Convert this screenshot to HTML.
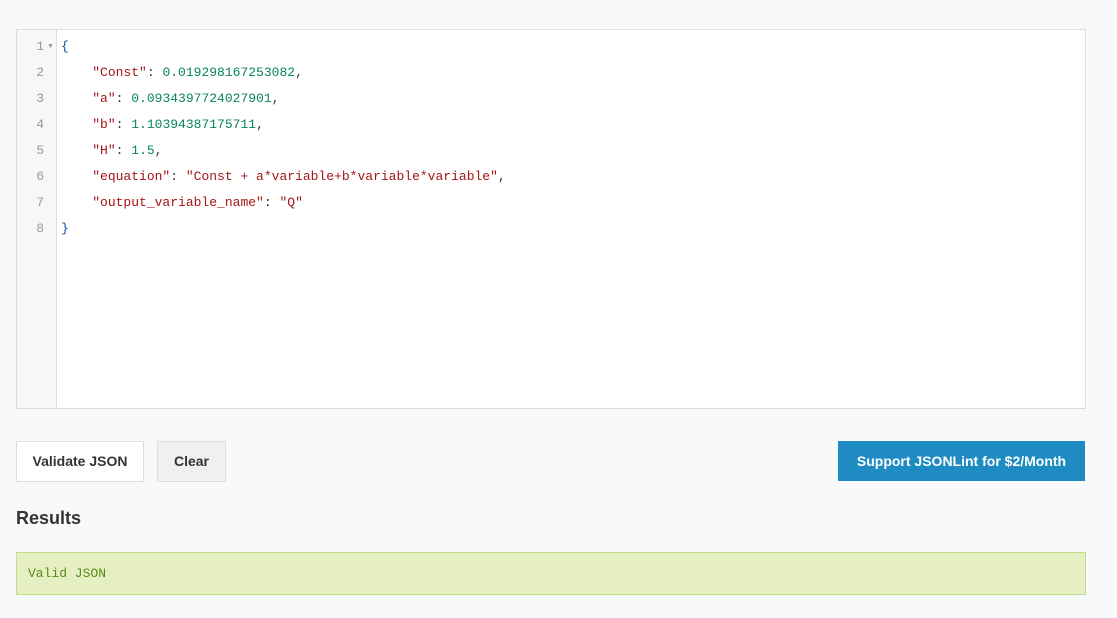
<!DOCTYPE html>
<html><head><style>
body{margin:0;background:#f8f9fb;width:1117px;height:618px;overflow:hidden;font-family:"Liberation Sans",sans-serif;}
.ed{position:absolute;left:16px;top:29px;width:1068px;height:378px;border:1px solid #ddd;background:#fff;}
.gut{position:absolute;left:0;top:0;width:39px;height:100%;background:#f7f7f7;border-right:1px solid #ddd;}
.ln{position:absolute;left:0;width:27px;text-align:right;color:#999;font:13px "Liberation Mono",monospace;line-height:26px;}
.code{position:absolute;left:44px;top:4px;font:13px "Liberation Mono",monospace;line-height:26px;color:#333;white-space:pre;}
.k{color:#a31515}.n{color:#098658}.s{color:#a31515}.p{color:#0451a5}
.btn{position:absolute;top:441px;height:39px;border:1px solid #ddd;font-weight:bold;font-size:14px;line-height:39px;text-align:center;color:#333;box-sizing:content-box}
</style></head><body>
<div class="ed"><div class="gut">
<div class="ln" style="top:4px">1</div><div style="position:absolute;left:30px;top:13px;font-size:7px;color:#999">▼</div>
<div class="ln" style="top:30px">2</div><div class="ln" style="top:56px">3</div><div class="ln" style="top:82px">4</div><div class="ln" style="top:108px">5</div><div class="ln" style="top:134px">6</div><div class="ln" style="top:160px">7</div><div class="ln" style="top:186px">8</div>
</div>
<div class="code"><span class="p">{</span>
    <span class="k">"Const"</span>: <span class="n">0.019298167253082</span>,
    <span class="k">"a"</span>: <span class="n">0.0934397724027901</span>,
    <span class="k">"b"</span>: <span class="n">1.10394387175711</span>,
    <span class="k">"H"</span>: <span class="n">1.5</span>,
    <span class="k">"equation"</span>: <span class="s">"Const + a*variable+b*variable*variable"</span>,
    <span class="k">"output_variable_name"</span>: <span class="s">"Q"</span>
<span class="p">}</span></div></div>
<div class="btn" style="left:16px;width:126px;background:#fff">Validate JSON</div>
<div class="btn" style="left:157px;width:67px;background:#f0f0f0">Clear</div>
<div class="btn" style="left:838px;width:247px;height:40px;border:none;background:#1e8bc3;color:#fff;line-height:40px">Support JSONLint for $2/Month</div>
<div style="position:absolute;left:16px;top:508px;font-size:18px;font-weight:bold;color:#333">Results</div>
<div style="position:absolute;left:16px;top:552px;width:1068px;height:41px;background:#e5efc2;border:1px solid #c5dc8a;font:13px 'Liberation Mono',monospace;line-height:41px;color:#5a8a1a;text-indent:11px">Valid JSON</div>
</body></html>
